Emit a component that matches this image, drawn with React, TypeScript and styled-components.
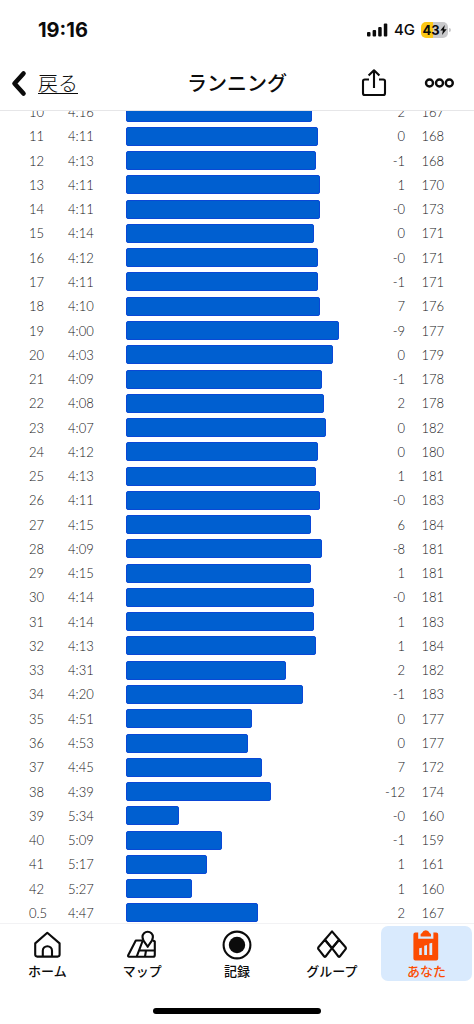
import type { CSSProperties, ReactNode } from "react";
import styled, { createGlobalStyle, ThemeProvider } from "styled-components";

const theme = {
  colors: {
    ink: "#0b0b0b",
    text: "#161618",
    line: "#e6e6e8",
    softLine: "#f2f2f4",
    bar: "#005fd0",
    barEdge: "#0a48d6",
    accent: "#fc4c02",
    active: "#d9eafd",
    battery: "#fcc816",
    batteryRest: "#c9c9cb",
  },
  fonts: {
    latin: `Inter, "Liberation Sans", sans-serif`,
    figures: `Lato, "Noto Sans CJK JP", sans-serif`,
    base: `"Noto Sans CJK JP", "Noto Sans", sans-serif`,
  },
};

type Split = {
  km: string;
  pace: string;
  length: number;
  elevation: string;
  heartRate: number;
};

const LONGEST = 213;

const split = (
  km: string,
  pace: string,
  length: number,
  elevation: string,
  heartRate: number
): Split => ({ km, pace, length, elevation, heartRate });

const splits: Split[] = [
  split("10", "4:16", 186, "2", 167),
  split("11", "4:11", 192, "0", 168),
  split("12", "4:13", 190, "-1", 168),
  split("13", "4:11", 194, "1", 170),
  split("14", "4:11", 194, "-0", 173),
  split("15", "4:14", 188, "0", 171),
  split("16", "4:12", 192, "-0", 171),
  split("17", "4:11", 192, "-1", 171),
  split("18", "4:10", 194, "7", 176),
  split("19", "4:00", 213, "-9", 177),
  split("20", "4:03", 207, "0", 179),
  split("21", "4:09", 196, "-1", 178),
  split("22", "4:08", 198, "2", 178),
  split("23", "4:07", 200, "0", 182),
  split("24", "4:12", 192, "0", 180),
  split("25", "4:13", 190, "1", 181),
  split("26", "4:11", 194, "-0", 183),
  split("27", "4:15", 185, "6", 184),
  split("28", "4:09", 196, "-8", 181),
  split("29", "4:15", 185, "1", 181),
  split("30", "4:14", 188, "-0", 181),
  split("31", "4:14", 188, "1", 183),
  split("32", "4:13", 190, "1", 184),
  split("33", "4:31", 160, "2", 182),
  split("34", "4:20", 177, "-1", 183),
  split("35", "4:51", 126, "0", 177),
  split("36", "4:53", 122, "0", 177),
  split("37", "4:45", 136, "7", 172),
  split("38", "4:39", 145, "-12", 174),
  split("39", "5:34", 53, "-0", 160),
  split("40", "5:09", 96, "-1", 159),
  split("41", "5:17", 81, "1", 161),
  split("42", "5:27", 66, "1", 160),
  split("0.5", "4:47", 132, "2", 167),
];

const GlobalStyle = createGlobalStyle`
  * {
    box-sizing: border-box;
  }

  body {
    margin: 0;
    background-color: #fff;
  }
`;

const Screen = styled.div`
  height: 100vh;
  display: flex;
  flex-direction: column;
  background-color: #fff;
  color: ${(props) => props.theme.colors.ink};
  font-family: ${(props) => props.theme.fonts.base};
`;

const StatusBar = styled.div`
  flex: none;
  height: 60px;
  padding: 0 23px 0 38px;
  display: flex;
  align-items: center;
  justify-content: space-between;
  font-family: ${(props) => props.theme.fonts.latin};
`;

const Clock = styled.time`
  font-size: 20px;
  font-weight: 700;
  line-height: 24px;
`;

const Indicators = styled.div`
  display: flex;
  align-items: center;
  gap: 6px;
`;

const Network = styled.span`
  font-size: 15px;
  font-weight: 500;
  line-height: 18px;
`;

const Battery = styled.div`
  display: flex;
  align-items: center;
  gap: 1px;
`;

const BatteryCell = styled.div`
  width: 27px;
  height: 16px;
  border-radius: 5px;
  display: flex;
  align-items: center;
  justify-content: center;
  background: linear-gradient(
    to right,
    ${(props) => props.theme.colors.battery} 43%,
    ${(props) => props.theme.colors.batteryRest} 43%
  );
  font-size: 13px;
  font-weight: 700;
  line-height: 16px;
`;

const BatteryTip = styled.div`
  width: 2px;
  height: 4px;
  border-radius: 0 2px 2px 0;
  background-color: ${(props) => props.theme.colors.batteryRest};
`;

const Header = styled.header`
  flex: none;
  height: 51px;
  padding: 0 10px 4px;
  display: grid;
  grid-template-columns: 1fr auto 1fr;
  align-items: center;
  border-bottom: 1px solid ${(props) => props.theme.colors.line};
`;

const BackLink = styled.a`
  display: flex;
  align-items: center;
  gap: 10px;
  color: inherit;
  font-size: 20px;
  font-weight: 300;
  line-height: 28px;
  text-decoration: none;

  span {
    border-bottom: 1px solid ${(props) => props.theme.colors.ink};
    line-height: 20px;
  }
`;

const Title = styled.h1`
  margin: 0;
  font-size: 20px;
  font-weight: 500;
  line-height: 28px;
`;

const Actions = styled.div`
  padding-right: 10px;
  display: flex;
  align-items: center;
  justify-content: flex-end;
  gap: 37px;
`;

const IconButton = styled.button`
  padding: 0;
  border: 0;
  background: none;
  color: inherit;
  display: flex;
  cursor: pointer;
`;

const Content = styled.main`
  flex: 1;
  min-height: 0;
  overflow: hidden;
  display: flex;
`;

/* scrolled so that the first row is half under the header */
const SplitTable = styled.table`
  flex: 1;
  margin: -11px 0 -2px;
  display: grid;
  color: ${(props) => props.theme.colors.text};
  font-family: ${(props) => props.theme.fonts.figures};
  font-size: 13px;
  font-weight: 300;
  line-height: 20px;
`;

const SplitBody = styled.tbody`
  display: grid;
  grid-auto-rows: 1fr;
`;

const SplitRow = styled.tr`
  padding: 0 30px 0 29px;
  display: grid;
  grid-template-columns: 39px 58px 1fr 66px 39px;
  align-items: center;
`;

const Cell = styled.td<{ $align?: "left" | "right" }>`
  padding: 0;
  text-align: ${(props) => props.$align ?? "left"};
`;

const Bar = styled.div`
  height: 19px;
  border: 1px solid ${(props) => props.theme.colors.barEdge};
  border-radius: 2px;
  background-color: ${(props) => props.theme.colors.bar};
`;

const TabBar = styled.nav`
  flex: none;
  padding-top: 2px;
  display: grid;
  grid-template-columns: repeat(5, 1fr);
  border-top: 1px solid ${(props) => props.theme.colors.softLine};
`;

const Tab = styled.a<{ $active?: boolean }>`
  height: 55px;
  margin: 0 2px;
  padding-top: 3px;
  border-radius: 7px;
  display: flex;
  flex-direction: column;
  align-items: center;
  background-color: ${(props) =>
    props.$active ? props.theme.colors.active : "transparent"};
  color: ${(props) =>
    props.$active ? props.theme.colors.accent : props.theme.colors.ink};
  font-size: 13px;
  font-weight: 500;
  line-height: 20px;
  text-decoration: none;

  svg {
    flex: none;
  }
`;

const HomeArea = styled.div`
  flex: none;
  height: 43px;
  padding-bottom: 10px;
  display: flex;
  align-items: flex-end;
  justify-content: center;
`;

const HomeIndicator = styled.div`
  width: 168px;
  height: 6px;
  border-radius: 3px;
  background-color: #000;
`;

const SignalIcon = () => (
  <svg width="21" height="14" viewBox="0 0 21 14" fill="currentColor">
    <rect x="0" y="9" width="3.5" height="4.5" rx="1" />
    <rect x="5.6" y="7" width="3.5" height="6.5" rx="1" />
    <rect x="11.2" y="4" width="3.5" height="9.5" rx="1" />
    <rect x="16.8" y="0.5" width="3.5" height="13" rx="1" />
  </svg>
);

const BoltIcon = () => (
  <svg width="7" height="10" viewBox="0 0 7 10" fill="currentColor">
    <path d="M4.8 0 0.3 5.6h2.6L2 10l4.7-5.8H4z" />
  </svg>
);

const BackIcon = () => (
  <svg width="18" height="28" viewBox="0 0 18 28" fill="none">
    <path
      d="M13.5 4.5 4.5 14.5l9 10"
      stroke="currentColor"
      strokeWidth="4.6"
      strokeLinecap="round"
      strokeLinejoin="round"
    />
  </svg>
);

const ShareIcon = () => (
  <svg
    width="26"
    height="30"
    viewBox="0 0 26 30"
    fill="none"
    stroke="currentColor"
    strokeWidth="2.1"
    strokeLinejoin="round"
  >
    <path d="M8 11.5H3.8Q2 11.5 2 13.3V25.2Q2 27 3.8 27H22.2Q24 27 24 25.2V13.3Q24 11.5 22.2 11.5H18" />
    <path d="M13 20V2.5M7.6 7.6 13 2.3l5.4 5.3" />
  </svg>
);

const MoreIcon = () => (
  <svg
    width="30"
    height="12"
    viewBox="0 0 30 12"
    fill="none"
    stroke="currentColor"
    strokeWidth="2.4"
  >
    <circle cx="5.5" cy="6" r="3.5" />
    <circle cx="15.5" cy="6" r="3.5" />
    <circle cx="25.3" cy="6" r="3.5" />
  </svg>
);

const TabIcon = ({ children }: { children: ReactNode }) => (
  <svg
    width="30"
    height="32"
    viewBox="0 -1 30 32"
    fill="none"
    stroke="currentColor"
    strokeWidth="2.1"
    strokeLinejoin="round"
  >
    {children}
  </svg>
);

const HomeIcon = () => (
  <TabIcon>
    <path d="M15.3 2.8 27.6 13.4V24.6Q27.6 26.6 25.6 26.6H5.2Q3.2 26.6 3.2 24.6V13.4Z" />
    <path d="M10.8 26.6V20.8a4.6 4.6 0 0 1 9.2 0v5.8" />
  </TabIcon>
);

const MapIcon = () => (
  <TabIcon>
    <path d="M15.6 10.5H8.8L1.2 25.2q-.5 1.5.9 1.5H26q1.8 0 1.8-1.8V11.5l-2-1.2" />
    <path d="M15.8 10.5 9.7 26.7M12 20.5H27.7M19 20.5l-1 6.2" />
    <path d="M20.7 16.8c-1.6-3.2-5.2-6-5.2-9.9a5.2 5.2 0 0 1 10.4 0c0 3.9-3.6 6.7-5.2 9.9z" />
  </TabIcon>
);

const RecordIcon = () => (
  <TabIcon>
    <circle cx="15" cy="15" r="13.4" />
    <circle cx="15" cy="15" r="8.2" fill="currentColor" stroke="none" />
  </TabIcon>
);

const GroupIcon = () => (
  <TabIcon>
    <path d="M15 1.4 22.1 9.8 15 18.2 7.9 9.8Z" />
    <path d="M7.9 9.8 15 18.2 8.6 26.5Q7.9 27.2 7.2 26.5L1.4 19.2Q.8 18.2 1.4 17.3Z" />
    <path d="M22.1 9.8 15 18.2 21.4 26.5Q22.1 27.2 22.8 26.5L28.6 19.2Q29.2 18.2 28.6 17.3Z" />
  </TabIcon>
);

const YouIcon = () => (
  <TabIcon>
    <g fill="currentColor" stroke="none">
      <path
        fillRule="evenodd"
        d="M3.4 2.6h2.8v6.2h15.2V2.6h2.8q2 0 2 2v24q0 2-2 2H3.4q-2 0-2-2v-24q0-2 2-2zM7.2 18.3V25h2.6v-7.3zM12.2 15.8V25h2.8v-9.9zM17.4 13.5V25h2.8V12.7z"
      />
      <path d="M8.6 6.6V4.6q0-1 1.2-1.3Q11.2.3 13.8.3t4 3q1.2.3 1.2 1.3v2z" />
    </g>
  </TabIcon>
);

const tabs = [
  { label: "ホーム", Icon: HomeIcon },
  { label: "マップ", Icon: MapIcon },
  { label: "記録", Icon: RecordIcon },
  { label: "グループ", Icon: GroupIcon },
  { label: "あなた", Icon: YouIcon, active: true },
];

const barStyle = (length: number): CSSProperties => ({
  width: `${(length / LONGEST) * 100}%`,
});

const App = () => (
  <ThemeProvider theme={theme}>
    <GlobalStyle />
    <Screen lang="ja">
      <StatusBar>
        <Clock>19:16</Clock>
        <Indicators>
          <SignalIcon />
          <Network>4G</Network>
          <Battery>
            <BatteryCell>
              43
              <BoltIcon />
            </BatteryCell>
            <BatteryTip />
          </Battery>
        </Indicators>
      </StatusBar>
      <Header>
        <BackLink href="#back">
          <BackIcon />
          <span>戻る</span>
        </BackLink>
        <Title>ランニング</Title>
        <Actions>
          <IconButton type="button" aria-label="共有">
            <ShareIcon />
          </IconButton>
          <IconButton type="button" aria-label="その他">
            <MoreIcon />
          </IconButton>
        </Actions>
      </Header>
      <Content>
        <SplitTable>
          <SplitBody>
            {splits.map((row) => (
              <SplitRow key={row.km}>
                <Cell>{row.km}</Cell>
                <Cell>{row.pace}</Cell>
                <Cell>
                  <Bar style={barStyle(row.length)} />
                </Cell>
                <Cell $align="right">{row.elevation}</Cell>
                <Cell $align="right">{row.heartRate}</Cell>
              </SplitRow>
            ))}
          </SplitBody>
        </SplitTable>
      </Content>
      <TabBar>
        {tabs.map(({ label, Icon, active }) => (
          <Tab
            key={label}
            href="#tab"
            $active={active}
            aria-current={active ? "page" : undefined}
          >
            <Icon />
            {label}
          </Tab>
        ))}
      </TabBar>
      <HomeArea>
        <HomeIndicator />
      </HomeArea>
    </Screen>
  </ThemeProvider>
);

export default App;
